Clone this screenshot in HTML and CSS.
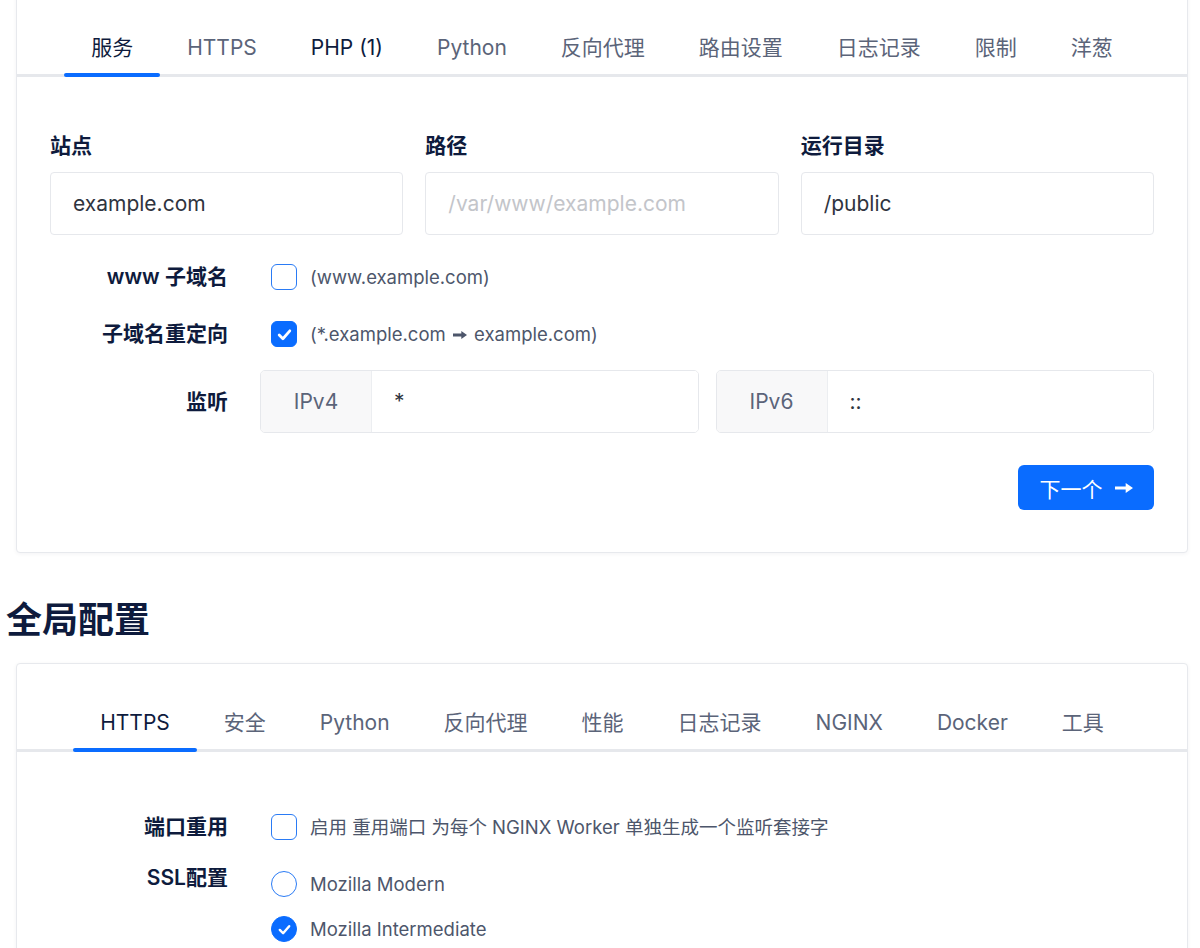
FILE: index.html
```html
<!DOCTYPE html>
<html lang="zh-CN">
<head>
    <meta charset="UTF-8">
    <meta name="viewport" content="width=device-width, initial-scale=1.0">
    <title>NGINX 配置</title>
    <link rel="stylesheet" href="styles.css">
</head>
<body>
    <main class="page">
        <!-- Domain section -->
        <section class="card card-first">
            <nav class="tabs">
                <ul>
                    <li class="active">服务</li>
                    <li>HTTPS</li>
                    <li class="changed">PHP (1)</li>
                    <li>Python</li>
                    <li>反向代理</li>
                    <li>路由设置</li>
                    <li>日志记录</li>
                    <li>限制</li>
                    <li>洋葱</li>
                </ul>
            </nav>
            <div class="card-body">
                <div class="field-grid">
                    <div class="field">
                        <label class="field-label">站点</label>
                        <input class="text-input" type="text" value="example.com">
                    </div>
                    <div class="field">
                        <label class="field-label">路径</label>
                        <input class="text-input" type="text" placeholder="/var/www/example.com">
                    </div>
                    <div class="field">
                        <label class="field-label">运行目录</label>
                        <input class="text-input" type="text" value="/public">
                    </div>
                </div>

                <div class="form-row row-www">
                    <span class="row-label">www 子域名</span>
                    <div class="row-control">
                        <span class="checkbox"></span>
                        <span class="hint">(www.example.com)</span>
                    </div>
                </div>

                <div class="form-row row-redirect">
                    <span class="row-label">子域名重定向</span>
                    <div class="row-control">
                        <span class="checkbox checked">
                            <svg viewBox="0 0 16 16" width="17" height="17"><polyline points="3,8.5 6.5,12 13,4.5" fill="none" stroke="#fff" stroke-width="2.6" stroke-linecap="round" stroke-linejoin="round"/></svg>
                        </span>
                        <span class="hint">(*.example.com <svg class="arrow-icon" viewBox="0 0 16 10" width="14" height="10"><path d="M0 3.4h9.5V0.4L16 5l-6.5 4.6V6.6H0z" fill="currentColor"/></svg> example.com)</span>
                    </div>
                </div>

                <div class="form-row row-listen">
                    <span class="row-label">监听</span>
                    <div class="row-control groups">
                        <div class="input-group">
                            <span class="prefix">IPv4</span>
                            <input class="group-input" type="text" value="*">
                        </div>
                        <div class="input-group">
                            <span class="prefix">IPv6</span>
                            <input class="group-input" type="text" value="::">
                        </div>
                    </div>
                </div>

                <div class="actions">
                    <button class="next-btn">下一个 <svg class="btn-arrow" viewBox="0 0 16 10" width="18" height="12"><path d="M0 3.7h9.5V0.6L16 5l-6.5 4.4V6.3H0z" fill="currentColor"/></svg></button>
                </div>
            </div>
        </section>

        <h1 class="section-title">全局配置</h1>

        <!-- Global section -->
        <section class="card">
            <nav class="tabs">
                <ul>
                    <li class="active">HTTPS</li>
                    <li>安全</li>
                    <li>Python</li>
                    <li>反向代理</li>
                    <li>性能</li>
                    <li>日志记录</li>
                    <li>NGINX</li>
                    <li>Docker</li>
                    <li>工具</li>
                </ul>
            </nav>
            <div class="card-body global-body">
                <div class="form-row row-reuse">
                    <span class="row-label">端口重用</span>
                    <div class="row-control">
                        <span class="checkbox"></span>
                        <span class="hint">启用 重用端口 为每个 NGINX Worker 单独生成一个监听套接字</span>
                    </div>
                </div>

                <div class="form-row row-ssl">
                    <span class="row-label">SSL配置</span>
                    <div class="radio-list">
                        <div class="radio-item">
                            <span class="radio"></span>
                            <span class="hint">Mozilla Modern</span>
                        </div>
                        <div class="radio-item">
                            <span class="radio checked">
                                <svg viewBox="0 0 16 16" width="15" height="15"><polyline points="3,8.5 6.5,12 13,4.5" fill="none" stroke="#fff" stroke-width="2.6" stroke-linecap="round" stroke-linejoin="round"/></svg>
                            </span>
                            <span class="hint">Mozilla Intermediate</span>
                        </div>
                    </div>
                </div>
            </div>
        </section>
    </main>
</body>
</html>
```

FILE: styles.css
```css
body {
    margin: 0;
    font-family: Inter, "Noto Sans CJK SC", sans-serif;
    background-color: #ffffff;
    color: #0e1b3d;
    overflow: hidden;
}

.page {
    padding: 0 12px 0 6px;
}

.card {
    margin-left: 10px;
    background-color: #ffffff;
    border: 1px solid #e7e9ed;
    border-radius: 4px;
    box-shadow: 0 1px 4px rgba(15, 27, 61, 0.05);
}

.card-first {
    margin-top: -12px;
}

/* Tabs */
.tabs ul {
    display: flex;
    justify-content: center;
    list-style-type: none;
    margin: 40px 0 0;
    padding: 0;
    border-bottom: 3px solid #e6e8ec;
}

.tabs li {
    position: relative;
    padding: 7px 27px 14px;
    font-size: 21px;
    line-height: 24px;
    color: #5b6479;
    white-space: nowrap;
}

.tabs li.active,
.tabs li.changed {
    color: #0e1b3d;
}

.tabs li.active::after {
    content: "";
    position: absolute;
    left: 0;
    right: 0;
    bottom: -3px;
    height: 4px;
    border-radius: 2px;
    background-color: #0a6cff;
}

/* Form body */
.card-body {
    padding: 55px 33px 42px;
}

.field-grid {
    display: grid;
    grid-template-columns: repeat(3, minmax(0, 1fr));
    column-gap: 22px;
}

.field-label {
    display: block;
    font-size: 21px;
    line-height: 28px;
    font-weight: 600;
    margin-bottom: 12px;
}

.text-input {
    box-sizing: border-box;
    width: 100%;
    height: 63px;
    padding: 0 22px;
    border: 1px solid #e6e8ec;
    border-radius: 4px;
    font-family: inherit;
    font-size: 21px;
    color: #2f3440;
    background-color: #ffffff;
    outline: none;
}

.text-input::placeholder {
    color: #c3c5ca;
}

.form-row {
    display: grid;
    grid-template-columns: 178px minmax(0, 1fr);
    column-gap: 32px;
    align-items: center;
}

.row-label {
    text-align: right;
    font-size: 21px;
    line-height: 26px;
    font-weight: 600;
}

.row-control {
    display: flex;
    align-items: center;
    gap: 13px;
    padding-left: 11px;
}

.row-www {
    margin-top: 29px;
}

.row-redirect {
    margin-top: 31px;
}

.row-listen {
    margin-top: 23px;
}

.hint {
    font-size: 18.5px;
    line-height: 26px;
    color: #4d566b;
}

.arrow-icon {
    margin: 0 2px;
    vertical-align: 1px;
}

.checkbox {
    box-sizing: border-box;
    width: 26px;
    height: 26px;
    flex-shrink: 0;
    border: 1.5px solid #2a7bf5;
    border-radius: 6px;
    display: flex;
    align-items: center;
    justify-content: center;
}

.checkbox.checked {
    background-color: #0a6cff;
    border-color: #0a6cff;
}

/* Listen input groups */
.row-control.groups {
    padding-left: 0;
    gap: 17px;
}

.input-group {
    flex: 1;
    min-width: 0;
    display: flex;
    height: 63px;
    box-sizing: border-box;
    border: 1px solid #e6e8ec;
    border-radius: 5px;
    overflow: hidden;
}

.prefix {
    width: 110px;
    flex-shrink: 0;
    display: flex;
    align-items: center;
    justify-content: center;
    background-color: #f8f8f9;
    border-right: 1px solid #eceef1;
    font-size: 21px;
    color: #5b6479;
}

.group-input {
    flex: 1;
    min-width: 0;
    width: 0;
    border: none;
    padding: 0 22px;
    font-family: inherit;
    font-size: 21px;
    color: #2f3440;
    outline: none;
}

.actions {
    display: flex;
    justify-content: flex-end;
    margin-top: 32px;
}

.next-btn {
    display: flex;
    align-items: center;
    justify-content: center;
    gap: 12px;
    height: 45px;
    width: 136px;
    border: none;
    border-radius: 6px;
    background-color: #0a6cff;
    color: #ffffff;
    font-family: inherit;
    font-size: 21px;
    cursor: pointer;
}

.section-title {
    margin: 42px 0 18px;
    font-size: 36px;
    line-height: 50px;
    font-weight: 700;
}

/* Global config */
.global-body {
    padding-top: 62px;
}

.row-ssl {
    margin-top: 31px;
    align-items: start;
}

.row-ssl .row-label {
    margin-top: -6px;
}

.radio-list {
    display: flex;
    flex-direction: column;
    gap: 19px;
    padding-left: 11px;
}

.radio-item {
    display: flex;
    align-items: center;
    gap: 13px;
}

.radio {
    box-sizing: border-box;
    width: 26px;
    height: 26px;
    border: 1.5px solid #2a7bf5;
    border-radius: 50%;
    display: flex;
    align-items: center;
    justify-content: center;
}

.radio.checked {
    background-color: #0a6cff;
    border-color: #0a6cff;
}
```
